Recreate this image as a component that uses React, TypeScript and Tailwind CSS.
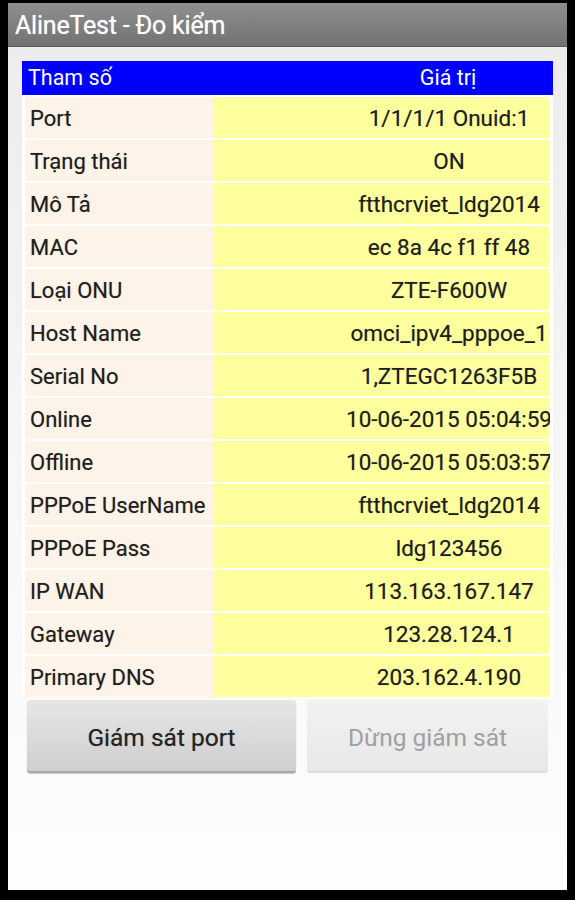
const rows: [string, string][] = [
  ['Port', '1/1/1/1 Onuid:1'],
  ['Trạng thái', 'ON'],
  ['Mô Tả', 'ftthcrviet_ldg2014'],
  ['MAC', 'ec 8a 4c f1 ff 48'],
  ['Loại ONU', 'ZTE-F600W'],
  ['Host Name', 'omci_ipv4_pppoe_1'],
  ['Serial No', '1,ZTEGC1263F5B'],
  ['Online', '10-06-2015 05:04:59'],
  ['Offline', '10-06-2015 05:03:57'],
  ['PPPoE UserName', 'ftthcrviet_ldg2014'],
  ['PPPoE Pass', 'ldg123456'],
  ['IP WAN', '113.163.167.147'],
  ['Gateway', '123.28.124.1'],
  ['Primary DNS', '203.162.4.190'],
];

export default function App() {
  return (
    <div className="w-[575px] h-[900px] bg-black pt-[3px] px-[8px] pb-[10px] font-['Roboto',sans-serif]">
      <div className="h-full flex flex-col bg-gradient-to-b from-[#ebebeb] via-[#f6f6f6] to-[#fdfdfd]">
        {/* Title bar */}
        <div className="h-[44px] shrink-0 flex items-center pl-[7px] pt-[2px] bg-gradient-to-b from-[#8f8f8f] to-[#727272] border-b border-[#5e5e5e]">
          <span className="text-white text-[25px] tracking-[-0.2px] [text-shadow:0_0_1px_rgba(255,255,255,0.7)]">AlineTest - Đo kiểm</span>
        </div>

        {/* Table */}
        <div className="mt-[14px] ml-[14px] w-[531px] flex flex-col gap-[2px] bg-white">
          <div className="h-[34px] flex bg-[#0000ff] text-white text-[21.5px]">
            <div className="w-[191px] shrink-0 pl-[6px] flex items-center">Tham số</div>
            <div className="flex-1 overflow-hidden flex">
              <div className="w-[470px] shrink-0 text-center leading-[34px]">Giá trị</div>
            </div>
          </div>
          {rows.map(([label, value]) => (
            <div key={label} className="h-[41px] mx-[3px] flex text-[#1e1e1e] [text-shadow:0_0_1px_rgba(0,0,0,0.35)]">
              <div className="w-[188px] shrink-0 pl-[5px] pt-[2px] flex items-center bg-[#fdf3e8] whitespace-nowrap text-[22px]">
                {label}
              </div>
              <div className="flex-1 overflow-hidden flex bg-[#ffff9e]">
                <div className="w-[472px] shrink-0 text-center leading-[43px] whitespace-nowrap text-[22.5px]">{value}</div>
              </div>
            </div>
          ))}
        </div>

        {/* Buttons */}
        <div className="mt-[3px] flex gap-[11px] pl-[19px]">
          <button className="w-[269px] h-[73px] pt-[5px] rounded-[3px] bg-gradient-to-b from-[#e6e6e6] to-[#cfcfcf] border-b-2 border-[#a8a8a8] shadow-[0_1px_1px_rgba(0,0,0,0.2)] text-[24.5px] text-[#222] [text-shadow:0_0_1px_rgba(0,0,0,0.35)]">
            Giám sát port
          </button>
          <button className="w-[241px] h-[73px] pt-[5px] rounded-[3px] bg-gradient-to-b from-[#f2f2f2] to-[#e8e8e8] border-b-2 border-[#dcdcdc] text-[24.5px] text-[#a0a0a0]">
            Dừng giám sát
          </button>
        </div>
      </div>
    </div>
  );
}
